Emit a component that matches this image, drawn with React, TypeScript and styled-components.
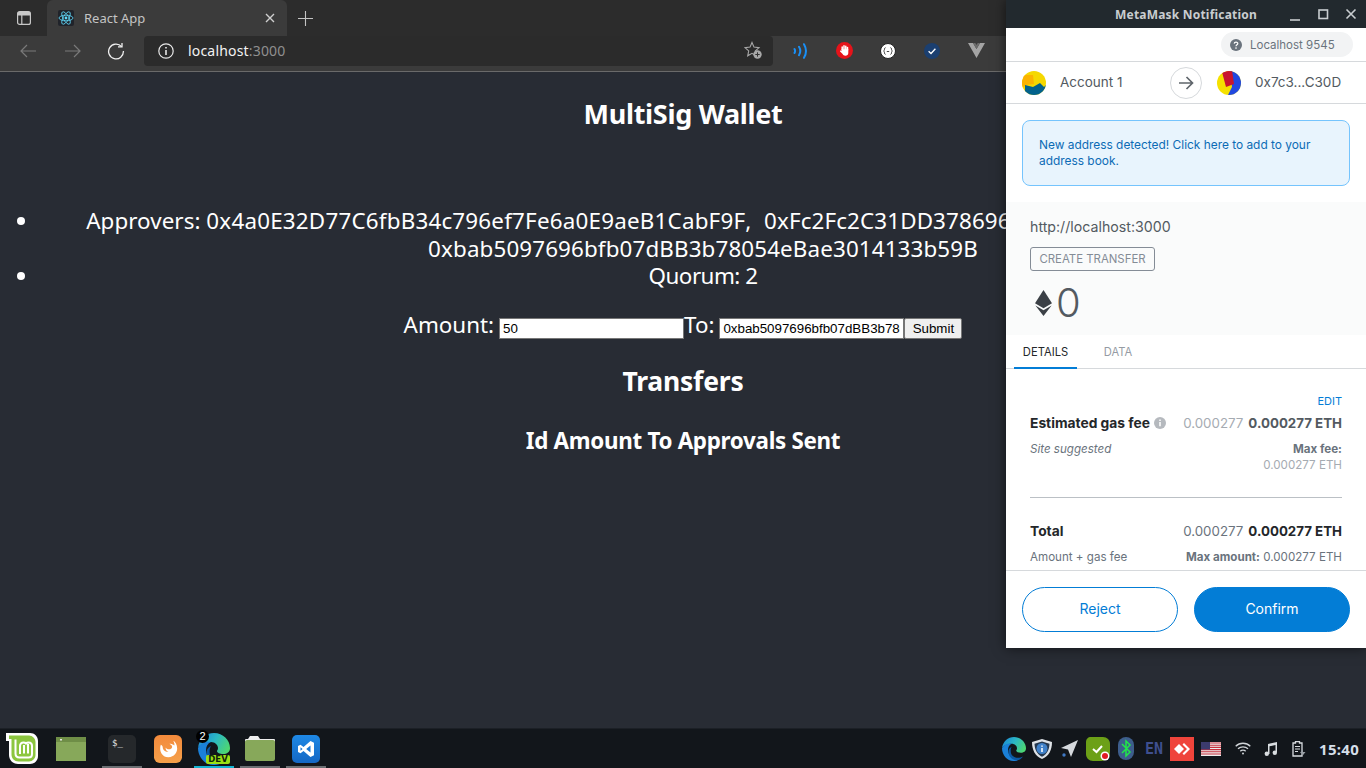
import React from "react";
import styled, { createGlobalStyle } from "styled-components";

const GlobalStyle = createGlobalStyle`
  html, body { margin: 0; padding: 0; background: #282c34; }
  * { box-sizing: border-box; }
`;

const UI_FONT = `"Noto Sans", "Liberation Sans", sans-serif`;
const MM_FONT = `Inter, "Liberation Sans", sans-serif`;

const Screen = styled.div`
  position: relative;
  width: 1366px;
  height: 768px;
  overflow: hidden;
  display: flex;
  flex-direction: column;
  background: #282c34;
  font-family: ${UI_FONT};
`;

/* browser chrome */
const TabStrip = styled.div`
  height: 36px;
  display: flex;
  align-items: center;
  background: #2c2c2c;
  color: #d8d8d8;
`;
const SideButton = styled.div`
  width: 47px;
  height: 36px;
  display: flex;
  align-items: center;
  justify-content: center;
`;
const Tab = styled.div`
  width: 240px;
  height: 36px;
  padding: 0 12px 0 11px;
  display: flex;
  align-items: center;
  background: #3b3b3b;
  border-radius: 6px 6px 0 0;
`;
const TabTitle = styled.span`
  flex: 1;
  margin-left: 10px;
  font-size: 13px;
  color: #c4c4c4;
`;
const NewTab = styled.div`
  width: 36px;
  height: 36px;
  display: flex;
  align-items: center;
  justify-content: center;
`;
const Toolbar = styled.div`
  height: 36px;
  display: flex;
  align-items: center;
  padding: 0 0 6px 6px;
  background: #3b3b3b;
  border-bottom: 1px solid #6a6a6a;
`;
const NavButton = styled.div`
  width: 44px;
  height: 30px;
  display: flex;
  align-items: center;
  justify-content: center;
`;
const UrlBar = styled.div`
  width: 629px;
  height: 30px;
  margin-left: 6px;
  padding: 0 10px 0 14px;
  display: flex;
  align-items: center;
  background: #2b2b2b;
  border-radius: 4px;
  font-size: 14px;
`;
const Host = styled.span`
  margin-left: 14px;
  flex: 1;
  color: #f2f2f2;
  letter-spacing: 0.18px;
`;
const Port = styled.span`
  color: #8f8f8f;
`;
const ExtIcon = styled.div<{ $first?: boolean }>`
  width: 44px;
  height: 30px;
  margin-left: ${(p) => (p.$first ? "5px" : "0")};
  display: flex;
  align-items: center;
  justify-content: center;
`;

/* dapp page */
const Page = styled.main`
  flex: 1;
  min-height: 0;
  color: #fff;
  text-align: center;
  overflow: hidden;
`;
const Title = styled.h1`
  margin: 26px 0 0;
  font-size: 27px;
  line-height: 32px;
  font-weight: 700;
  letter-spacing: -0.3px;
`;
const InfoList = styled.ul`
  margin: 77px 0 0;
  padding: 0 0 0 40px;
  font-size: 22.4px;
  line-height: 27.5px;
  letter-spacing: -0.52px;
`;
const Label = styled.span`
  letter-spacing: 0.05px;
`;
const Address = styled.span<{ $wide?: boolean }>`
  letter-spacing: ${(p) => (p.$wide ? "0.2px" : "0.12px")};
`;
const Separator = styled.span`
  word-spacing: 8px;
`;
const TransferForm = styled.form`
  margin-top: 20px;
  font-size: 22.4px;
  line-height: 29px;
  letter-spacing: -0.02px;
`;
const FormInput = styled.input`
  width: 185px;
  height: 21px;
  margin-left: 5px;
  padding: 1px 3px;
  border: 1px solid #767676;
  background: #fff;
  color: #000;
  font: 13.33px "Liberation Sans", sans-serif;
  letter-spacing: 0;
  vertical-align: 0;
`;
const SubmitButton = styled.button`
  width: 58px;
  height: 21px;
  padding: 0;
  border: 1px solid #767676;
  border-radius: 2px;
  background: #efefef;
  color: #000;
  font: 13.33px "Liberation Sans", sans-serif;
  letter-spacing: 0;
  vertical-align: 0;
`;
const SectionTitle = styled.h2`
  margin: 26px 0 0;
  font-size: 26.5px;
  line-height: 32px;
  font-weight: 700;
  letter-spacing: -0.2px;
`;
const TableHead = styled.h3`
  margin: 29px 0 0;
  font-size: 22.4px;
  line-height: 30px;
  font-weight: 700;
  letter-spacing: -0.3px;
`;

/* desktop panel */
const Taskbar = styled.footer`
  height: 40px;
  padding-left: 2px;
  display: flex;
  align-items: center;
  background: #12161b;
  border-top: 1px solid #1c2026;
`;
const LaunchSlot = styled.div<{ $w: number; $bar?: string }>`
  position: relative;
  width: ${(p) => p.$w}px;
  height: 39px;
  display: flex;
  align-items: center;
  justify-content: center;
  &::after {
    content: "";
    position: absolute;
    left: 3px;
    right: 3px;
    bottom: 0;
    height: 2px;
    background: ${(p) => p.$bar || "transparent"};
  }
`;
const CountBadge = styled.span`
  position: absolute;
  left: 5px;
  top: 1px;
  width: 13px;
  height: 13px;
  border-radius: 50%;
  background: #000;
  color: #fff;
  font: 11px/13px "Liberation Sans", sans-serif;
  text-align: center;
`;
const DevBadge = styled.span`
  position: absolute;
  left: 15px;
  bottom: 4px;
  width: 24px;
  height: 9px;
  border-radius: 2px;
  background: #9ce015;
  color: #10240a;
  font: 700 8.5px/9px "DejaVu Sans", sans-serif;
  text-align: center;
`;
const Tray = styled.div`
  margin-left: auto;
  display: flex;
  align-items: center;
`;
const TraySlot = styled.div<{ $gap?: number }>`
  width: 28px;
  height: 39px;
  margin-left: ${(p) => p.$gap || 0}px;
  display: flex;
  align-items: center;
  justify-content: center;
`;
const LangLabel = styled.span`
  color: #3f4f8f;
  font: 700 15px "DejaVu Sans Mono", monospace;
`;
const Clock = styled.span`
  width: 47px;
  margin-left: 6px;
  color: #d5dfe9;
  font: 700 15px "Noto Sans", sans-serif;
  letter-spacing: 0.3px;
`;

/* metamask window */
const Popup = styled.section`
  position: absolute;
  left: 1006px;
  top: 0;
  width: 360px;
  height: 648px;
  display: flex;
  flex-direction: column;
  background: #fff;
  box-shadow: 0 0 12px rgba(0, 0, 0, 0.6);
  font-family: ${MM_FONT};
  color: #24272a;
`;
const TitleBar = styled.header`
  position: relative;
  height: 28px;
  flex: none;
  display: flex;
  align-items: center;
  justify-content: center;
  background: #22292e;
  color: #c9cdd0;
  font: 700 12px ${UI_FONT};
  letter-spacing: 0.2px;
`;
const WinControls = styled.div`
  position: absolute;
  right: 7px;
  top: 6px;
  display: flex;
  gap: 12px;
`;
const NetworkRow = styled.div`
  height: 34px;
  flex: none;
  padding: 4px 13px 0 0;
  display: flex;
  justify-content: flex-end;
  align-items: flex-start;
  border-bottom: 1px solid #d6d9dc;
`;
const NetworkPill = styled.div`
  width: 132px;
  height: 25px;
  padding-left: 9px;
  display: flex;
  align-items: center;
  gap: 8px;
  border-radius: 13px;
  background: #f2f3f4;
  color: #6a737d;
  font-size: 11.5px;
`;
const AccountRow = styled.div`
  position: relative;
  height: 42px;
  flex: none;
  display: grid;
  grid-template-columns: 1fr 1fr;
  border-bottom: 1px solid #d6d9dc;
  font-size: 13.5px;
  color: #535a61;
`;
const Party = styled.div<{ $gap: number; $pad: number }>`
  display: flex;
  align-items: center;
  gap: ${(p) => p.$gap}px;
  padding-left: ${(p) => p.$pad}px;
`;
const PartyName = styled.span`
  position: relative;
  top: -1px;
`;
const ArrowDisc = styled.div`
  position: absolute;
  left: 164px;
  top: 5px;
  width: 32px;
  height: 32px;
  display: flex;
  align-items: center;
  justify-content: center;
  border: 1px solid #d6d9dc;
  border-radius: 50%;
  background: #fff;
`;
const Notice = styled.div`
  flex: none;
  height: 66px;
  margin: 16px 16px 16px;
  padding: 16px 16px 0;
  border: 1px solid #75c4fd;
  border-radius: 8px;
  background: #e8f4fd;
  color: #0c6bb5;
  font-size: 11.9px;
  line-height: 16px;
`;
const Summary = styled.div`
  height: 133px;
  flex: none;
  padding: 16px 16px 0 24px;
  background: #fafbfb;
`;
const Origin = styled.div`
  font-size: 14.2px;
  line-height: 18px;
  color: #535a61;
`;
const MethodTag = styled.div`
  width: 125px;
  height: 24px;
  margin-top: 11px;
  display: flex;
  align-items: center;
  justify-content: center;
  border: 1px solid #848c96;
  border-radius: 3px;
  color: #848c96;
  font-size: 11.4px;
`;
const AmountRow = styled.div`
  margin-top: 10px;
  padding-left: 5px;
  display: flex;
  align-items: center;
  gap: 4px;
  font-size: 40px;
  line-height: 44px;
  font-weight: 300;
  color: #535a61;
`;
const TabRow = styled.nav`
  height: 34px;
  flex: none;
  padding-left: 8px;
  display: flex;
  border-bottom: 1px solid #d6d9dc;
`;
const DetailTab = styled.div<{ $active?: boolean }>`
  width: ${(p) => (p.$active ? "63px" : "82px")};
  height: 34px;
  padding-top: 9.5px;
  text-align: center;
  font-size: 11.2px;
  line-height: 14px;
  color: ${(p) => (p.$active ? "#24272a" : "#959ba3")};
  border-bottom: ${(p) => (p.$active ? "2px solid #037dd6" : "none")};
`;
const Details = styled.div`
  flex: 1;
  min-height: 0;
  overflow: hidden;
  padding: 25px 24px 0;
`;
const EditLink = styled.div`
  text-align: right;
  font-size: 11px;
  line-height: 14px;
  color: #037dd6;
`;
const FeeRow = styled.div<{ $top: number; $start?: boolean }>`
  margin-top: ${(p) => p.$top}px;
  display: flex;
  justify-content: space-between;
  align-items: ${(p) => (p.$start ? "flex-start" : "center")};
`;
const FeeLabel = styled.div`
  display: flex;
  align-items: center;
  gap: 4px;
  font-size: 13.8px;
  font-weight: 700;
  line-height: 18px;
  color: #24272a;
`;
const FeeValue = styled.div`
  font-size: 13.3px;
  line-height: 18px;
  font-weight: 700;
  color: #535a61;
`;
const Faint = styled.span<{ $dark?: boolean }>`
  margin-right: 5px;
  font-weight: 400;
  color: ${(p) => (p.$dark ? "#6a737d" : "#a5abb2")};
`;
const Strong = styled.span`
  color: #24272a;
`;
const SmallNote = styled.div<{ $italic?: boolean }>`
  font-size: 11.6px;
  line-height: 16px;
  font-style: ${(p) => (p.$italic ? "italic" : "normal")};
  color: #6a737d;
`;
const MaxFee = styled.div<{ $dark?: boolean }>`
  text-align: right;
  font-size: 11.6px;
  line-height: 16px;
  color: ${(p) => (p.$dark ? "#6a737d" : "#a5abb2")};
`;
const MaxLabel = styled.b`
  color: #6a737d;
`;
const Rule = styled.hr`
  margin: 24px 0 0;
  border: 0;
  border-top: 1px solid #bbc0c5;
`;
const Footer = styled.div`
  height: 78px;
  flex: none;
  padding: 16px 16px 0;
  display: flex;
  gap: 16px;
  border-top: 1px solid #d6d9dc;
`;
const ActionButton = styled.button<{ $primary?: boolean }>`
  flex: 1;
  height: 45px;
  padding: 0 0 2px;
  border: 1px solid #037dd6;
  border-radius: 23px;
  background: ${(p) => (p.$primary ? "#037dd6" : "#fff")};
  color: ${(p) => (p.$primary ? "#fff" : "#037dd6")};
  font: 400 14px ${MM_FONT};
`;

const SidebarIcon = () => (
  <svg width="16" height="16" viewBox="0 0 16 16" fill="none" stroke="#c8c8c8" strokeWidth="1.2">
    <rect x="1.6" y="1.6" width="12.8" height="12.8" rx="2" />
    <path d="M1.6 5h12.8M5.8 5v9.4" />
    <path d="M2 2h12v3H2z" fill="#c8c8c8" stroke="none" />
  </svg>
);
const ReactFavicon = () => (
  <svg width="16" height="16" viewBox="0 0 16 16" fill="none" stroke="#61dafb" strokeWidth="0.8">
    <rect width="16" height="16" rx="2" fill="#20232a" stroke="none" />
    <ellipse cx="8" cy="8" rx="7" ry="2.8" />
    <ellipse cx="8" cy="8" rx="7" ry="2.8" transform="rotate(60 8 8)" />
    <ellipse cx="8" cy="8" rx="7" ry="2.8" transform="rotate(120 8 8)" />
    <circle cx="8" cy="8" r="1.4" fill="#61dafb" stroke="none" />
  </svg>
);
const CloseGlyph = () => (
  <svg width="10" height="10" viewBox="0 0 10 10" stroke="#cfcfcf" strokeWidth="1.4">
    <path d="M1 1l8 8M9 1l-8 8" />
  </svg>
);
const PlusGlyph = () => (
  <svg width="15" height="15" viewBox="0 0 15 15" stroke="#c4c4c4" strokeWidth="1.1">
    <path d="M7.5 0v15M0 7.5h15" />
  </svg>
);
const ArrowGlyph = ({ d }: { d: string }) => (
  <svg width="17" height="14" viewBox="0 0 17 14" fill="none" stroke="#7a7a7a" strokeWidth="1.2">
    <path d={d} />
  </svg>
);
const ReloadGlyph = () => (
  <svg width="18" height="18" viewBox="0 0 18 18" fill="none" stroke="#f0f0f0" strokeWidth="1.3">
    <path d="M14.6 4.6A7.4 7.4 0 1 0 16.4 9" />
    <path d="M11 4.8h4V1" />
  </svg>
);
const InfoGlyph = () => (
  <svg width="16" height="16" viewBox="0 0 16 16" fill="none" stroke="#e8e8e8" strokeWidth="1.2">
    <circle cx="8" cy="8" r="7.2" />
    <path d="M8 7v5M8 4v1.6" strokeWidth="1.6" />
  </svg>
);
const StarAdd = () => (
  <svg width="19" height="19" viewBox="0 0 19 19" fill="none">
    <path d="M8 1.5l2 4.6 5 .5-3.7 3.3 1 4.9L8 12.3l-4.3 2.5 1-4.9L1 6.6l5-.5z" stroke="#a8a8a8" strokeWidth="1.1" />
    <circle cx="13.5" cy="13.5" r="4.2" fill="#a8a8a8" />
    <path d="M13.5 11.3v4.4M11.3 13.5h4.4" stroke="#333" strokeWidth="1" />
  </svg>
);
const WavesExt = () => (
  <svg width="15" height="16" viewBox="0 0 15 16" fill="none" stroke="#1a8ff5" strokeWidth="2" strokeLinecap="round">
    <path d="M1.5 6q1.2 2 0 4M6 3.800q2.600 4.200 0 8.400M11 1.200q4 6.800 0 13.600" />
  </svg>
);
const StopExt = () => (
  <svg width="17" height="17" viewBox="0 0 17 17">
    <circle cx="8.500" cy="8.500" r="8.500" fill="#e5131a" />
    <path d="M6.200 8V5M8 7.500V3.800M9.800 7.500V4.300M11.500 8V5.500" stroke="#fff" strokeWidth="1.500" strokeLinecap="round" />
    <path d="M5.400 7.200h6.900V11c0 1.700-1.200 2.800-2.900 2.800-1.400 0-2.200-.6-2.800-1.700L4.100 9.500c-.4-.8.500-1.400 1.100-.8l.6.600z" fill="#fff" />
  </svg>
);
const BracketExt = () => (
  <svg width="16" height="16" viewBox="0 0 16 16">
    <circle cx="8" cy="8" r="7.5" fill="#fff" stroke="#222" strokeWidth="1" />
    <path d="M5.500 4.500C4 4.500 5 8 3.600 8 5 8 4 11.500 5.500 11.500M10.500 4.500C12 4.500 11 8 12.400 8 11 8 12 11.500 10.500 11.500M6.800 8.500h2.400" fill="none" stroke="#333" strokeWidth="0.9" />
  </svg>
);
const CheckExt = () => (
  <svg width="16" height="16" viewBox="0 0 16 16">
    <circle cx="8" cy="8" r="8" fill="#1b3f70" />
    <path d="M4.600 8.300l2.400 2.200 4.400-4.800" fill="none" stroke="#fff" strokeWidth="1.300" />
  </svg>
);
const VueExt = () => (
  <svg width="17" height="15" viewBox="0 0 17 15">
    <path d="M0 0h5l3.500 6L12 0h5L8.500 15z" fill="#a4a4a4" />
    <path d="M5 0h2.300l1.200 2 1.200-2H12L8.500 6z" fill="#6c6c6c" />
  </svg>
);

const Jazzicon = ({ kind }: { kind: "a" | "b" }) => (
  <svg width="24" height="24" viewBox="0 0 24 24">
    <defs>
      <clipPath id={`jz-${kind}`}>
        <circle cx="12" cy="12" r="12" />
      </clipPath>
    </defs>
    {kind === "a" ? (
      <g clipPath="url(#jz-a)">
        <rect width="24" height="24" fill="#f5d800" />
        <path d="M0 4h11l1 9-8 1-4 3z" fill="#fbb300" />
        <path d="M3 14l8 2 7-4 4 4 2-2v10H3z" fill="#03628c" />
      </g>
    ) : (
      <g clipPath="url(#jz-b)">
        <rect width="24" height="24" fill="#f5e100" />
        <path d="M13 -2l11 2v26H10l5-10z" fill="#2148e0" />
        <path d="M5 1l10-2 2 14-8 3z" fill="#c8152e" />
      </g>
    )}
  </svg>
);
const HelpDot = () => (
  <svg width="12" height="12" viewBox="0 0 12 12">
    <circle cx="6" cy="6" r="6" fill="#6a737d" />
    <path d="M4.200 4.600C4.300 2.600 7.800 2.600 7.800 4.500 7.800 5.800 6 5.700 6 7.200" fill="none" stroke="#fff" strokeWidth="1.200" />
    <circle cx="6" cy="9.100" r="0.8" fill="#fff" />
  </svg>
);
const EthMark = () => (
  <svg width="17" height="26" viewBox="0 0 17 26">
    <path d="M8.500 0L17 13.200 8.500 18.200 0 13.200z" fill="#3b4046" />
    <path d="M8.500 20.200L16.600 15.400 8.500 26 .4 15.400z" fill="#3b4046" />
  </svg>
);
const FeeInfo = () => (
  <svg width="12" height="12" viewBox="0 0 12 12">
    <circle cx="6" cy="6" r="6" fill="#b5b9be" />
    <path d="M6 5v4.200M6 2.400v1.500" stroke="#fff" strokeWidth="1.500" />
  </svg>
);
const PopupArrow = () => (
  <svg width="16" height="14" viewBox="0 0 16 14" fill="none" stroke="#5f656b" strokeWidth="1.700">
    <path d="M1 7h13M8.500 1l6 6-6 6" />
  </svg>
);

const MintLogo = () => (
  <svg width="32" height="31" viewBox="0 0 32 31">
    <path d="M0 0h24c4.500 0 8 3.500 8 8v15c0 4.500-3.500 8-8 8H12c-5 0-9-4-9-9V8H0z" fill="#fff" />
    <path d="M3 2.500h20c3.500 0 6.500 3 6.500 6.500v13c0 3.500-3 6.500-6.500 6.500H12.500C8.500 28.500 5.500 25.500 5.500 21.500V6H3z" fill="#8cc63f" />
    <path d="M9.500 6.500v14c0 2.500 1.500 4 4 4h9c2 0 3.500-1.500 3.500-3.500v-8c0-2-1.500-3.500-3.500-3.500-1.200 0-2 .5-2.500 1-.6-.6-1.400-1-2.500-1-2.200 0-3.500 1.500-3.500 3.500v8" fill="none" stroke="#fff" strokeWidth="2" />
    <path d="M18 12v8.500M22 11v9.500" stroke="#fff" strokeWidth="2" />
  </svg>
);
const WindowIcon = () => (
  <svg width="30" height="24" viewBox="0 0 30 24">
    <rect width="30" height="24" fill="#87a85a" />
    <rect width="30" height="5" fill="#6f8e47" />
    <rect x="4" y="2" width="2" height="1.500" fill="#e8e8e8" />
  </svg>
);
const TerminalIcon = () => (
  <svg width="28" height="28" viewBox="0 0 28 28">
    <rect width="28" height="28" rx="5" fill="#25282b" />
    <text x="4" y="11" fill="#e8e8e8" fontSize="9" fontFamily="DejaVu Sans Mono">$_</text>
  </svg>
);
const FoxIcon = () => (
  <svg width="28" height="28" viewBox="0 0 29 29">
    <defs>
      <linearGradient id="fox-bg" x1="0" y1="0" x2="0" y2="1">
        <stop offset="0" stopColor="#f38a3c" />
        <stop offset="1" stopColor="#f5a04a" />
      </linearGradient>
    </defs>
    <rect width="29" height="29" rx="6" fill="url(#fox-bg)" />
    <path d="M7 10c-2 6 1 13 8 13 6 0 9-5 9-9 0-4-2-7-4-8 1 2 1.500 4 1 5-1-1.500-3-2-5-2 2 1 4 3 2 5-2 1.500-5 1-6-1 0 2 1 4 3 4.500-3 .5-6-2-6-5 0-.8-.500-1.800-2-2.500z" fill="#fff" />
  </svg>
);
const EdgeIcon = ({ size }: { size: number }) => (
  <svg width={size} height={size} viewBox="0 0 32 32">
    <defs>
      <linearGradient id={`edge-${size}`} x1="0" y1="0.2" x2="1" y2="0.6">
        <stop offset="0" stopColor="#1b87d8" />
        <stop offset="0.5" stopColor="#2bb8c4" />
        <stop offset="1" stopColor="#4dd672" />
      </linearGradient>
    </defs>
    <path d="M0 15C1 6 8 0 16 0c9 0 16 7 16 15 0 4-3 6-7 6-3 0-6-1-6-3 0-1 1-1 1-3 0-3-3-6-7-6-5 0-11 2-13 6z" fill={`url(#edge-${size})`} />
    <path d="M0 15c3-6 9-7 13-6-5 2-6 8-4 13 2 5 8 9 14 8-3 2-6 2-8 2C7 32 0 24 0 15z" fill="#1a80d8" />
    <path d="M13 13c-2 3-2 9 1 12 3 3 9 4 14 1-2 3-5 5-8 5-5 0-10-3-11-9-1-4 0-7 4-9z" fill="#0c59a4" />
  </svg>
);
const FolderIcon = () => (
  <svg width="30" height="25" viewBox="0 0 30 25">
    <path d="M3 3l2-3h8l2 3z" fill="#eee" />
    <rect y="3" width="30" height="3" rx="1" fill="#eee" />
    <rect y="4" width="30" height="21" rx="2" fill="#87a85a" />
  </svg>
);
const VsCodeIcon = () => (
  <svg width="28" height="28" viewBox="0 0 28 28">
    <defs>
      <linearGradient id="vs-bg" x1="0" y1="0" x2="0" y2="1">
        <stop offset="0" stopColor="#1e88e5" />
        <stop offset="1" stopColor="#1467c4" />
      </linearGradient>
    </defs>
    <rect width="28" height="28" rx="5" fill="url(#vs-bg)" />
    <path d="M18.500 6l3.500 1.800v12.400L18.500 22l-7-6-3 2.300L6 17v-6l2.500-1.300 3 2.300zM18.500 10.500L14.200 14l4.300 3.500zM8.500 12.300v3.400l2.100-1.700z" fill="#fff" fillRule="evenodd" />
  </svg>
);
const ShieldIcon = () => (
  <svg width="20" height="20" viewBox="0 0 20 20">
    <path d="M10 0l10 3c0 8-3 14-10 17C3 17 0 11 0 3z" fill="#dfe3e7" />
    <path d="M10 2.500l7.500 2.200c-.2 6-2.500 10.500-7.500 13-5-2.500-7.300-7-7.500-13z" fill="#24384f" />
    <circle cx="10" cy="9.500" r="5.500" fill="#3f80c8" />
    <path d="M10 6.400v1.400M10 9v4" stroke="#fff" strokeWidth="1.500" />
  </svg>
);
const SendIcon = () => (
  <svg width="18" height="18" viewBox="0 0 18 18">
    <path d="M17 0L0 8l7 1.500L10 17z" fill="#d5d9dd" />
    <circle cx="3" cy="15" r="1.700" fill="#3f78c4" />
  </svg>
);
const TaskCheckIcon = () => (
  <svg width="24" height="24" viewBox="0 0 24 24">
    <path d="M5 0h12c4 0 7 3 7 7v8c0 5-4 9-9 9H7c-4 0-7-3-7-7V5c0-3 2-5 5-5z" fill="#6ca017" />
    <path d="M7 12l3.500 3L16 9" fill="none" stroke="#fff" strokeWidth="2" />
    <circle cx="19" cy="19" r="4.500" fill="#fff" />
    <circle cx="19" cy="19" r="3" fill="#e21b24" />
  </svg>
);
const BluetoothIcon = () => (
  <svg width="16" height="23" viewBox="0 0 16 23">
    <rect width="16" height="23" rx="8" fill="#3d5e8c" />
    <path d="M4 7l8 8-4 4V4l4 4-8 8" fill="none" stroke="#22e64a" strokeWidth="1.500" />
  </svg>
);
const AnyDeskIcon = () => (
  <svg width="24" height="24" viewBox="0 0 24 24">
    <rect width="24" height="24" fill="#ef443b" />
    <path d="M4 12l5-5 5 5-5 5z" fill="#fff" />
    <path d="M14 6l6 6-6 6-1.500-1.500L17 12l-4.500-4.500z" fill="#fff" />
  </svg>
);
const FlagIcon = () => (
  <svg width="20" height="14" viewBox="0 0 20 14">
    <rect width="20" height="14" fill="#eee" />
    <path d="M0 1h20M0 3.200h20M0 5.400h20M0 7.600h20M0 9.800h20M0 12h20" stroke="#c8313e" strokeWidth="1.100" />
    <rect width="9" height="7.500" fill="#3c3b6e" />
  </svg>
);
const WifiIcon = () => (
  <svg width="16" height="13" viewBox="0 0 16 13" fill="none" stroke="#d0d4d8" strokeWidth="1.300">
    <path d="M.7 4.200a10.500 10.500 0 0 1 14.600 0M3 6.800a7.200 7.200 0 0 1 10 0M5.300 9.200a3.800 3.800 0 0 1 5.400 0" />
    <circle cx="8" cy="11.500" r="1" fill="#d0d4d8" stroke="none" />
  </svg>
);
const MusicIcon = () => (
  <svg width="14" height="14" viewBox="0 0 14 14">
    <path d="M4 2l9-2v10.500h-1.500V3L5.500 4.300V12H4z" fill="#d8dce0" />
    <circle cx="2.800" cy="11.800" r="2.200" fill="#d8dce0" />
    <circle cx="10.800" cy="10.800" r="2.200" fill="#d8dce0" />
  </svg>
);
const BatteryIcon = () => (
  <svg width="14" height="16" viewBox="0 0 14 16" fill="none">
    <path d="M1 2h2.500V.500h4V2H10v13H1z" stroke="#d8dce0" strokeWidth="1.300" />
    <path d="M3 5.500h5M3 8h5M3 10.500h3" stroke="#d8dce0" strokeWidth="1.200" />
    <path d="M11 8l-3 4h2.500L9.500 16l4-5H11z" fill="#9aa0a6" />
  </svg>
);

const App: React.FC = () => (
  <Screen>
    <GlobalStyle />
    <TabStrip>
      <SideButton>
        <SidebarIcon />
      </SideButton>
      <Tab>
        <ReactFavicon />
        <TabTitle>React App</TabTitle>
        <CloseGlyph />
      </Tab>
      <NewTab>
        <PlusGlyph />
      </NewTab>
    </TabStrip>
    <Toolbar>
      <NavButton>
        <ArrowGlyph d="M16 7H1M7 1L1 7l6 6" />
      </NavButton>
      <NavButton>
        <ArrowGlyph d="M1 7h15M10 1l6 6-6 6" />
      </NavButton>
      <NavButton>
        <ReloadGlyph />
      </NavButton>
      <UrlBar>
        <InfoGlyph />
        <Host>
          localhost<Port>:3000</Port>
        </Host>
        <StarAdd />
      </UrlBar>
      <ExtIcon $first>
        <WavesExt />
      </ExtIcon>
      <ExtIcon>
        <StopExt />
      </ExtIcon>
      <ExtIcon>
        <BracketExt />
      </ExtIcon>
      <ExtIcon>
        <CheckExt />
      </ExtIcon>
      <ExtIcon>
        <VueExt />
      </ExtIcon>
    </Toolbar>

    <Page>
      <Title>MultiSig Wallet</Title>
      <InfoList>
        <li>
          <Label>Approvers: </Label>
          <Address $wide>0x4a0E32D77C6fbB34c796ef7Fe6a0E9aeB1CabF9F</Address>
          <Separator>, </Separator>
          <Address>0xFc2Fc2C31DD378696aB1C2D3E4F5a6B7c8D9E0F1</Address>
          <Separator>, </Separator>
          <Address>0xbab5097696bfb07dBB3b78054eBae3014133b59B</Address>
        </li>
        <li>Quorum: 2</li>
      </InfoList>
      <TransferForm onSubmit={(e) => e.preventDefault()}>
        Amount:
        <FormInput defaultValue="50" />
        To:
        <FormInput defaultValue="0xbab5097696bfb07dBB3b78054eBae3014133b59B" />
        <SubmitButton>Submit</SubmitButton>
      </TransferForm>
      <SectionTitle>Transfers</SectionTitle>
      <TableHead>Id Amount To Approvals Sent</TableHead>
    </Page>

    <Taskbar>
      <LaunchSlot $w={40}>
        <MintLogo />
      </LaunchSlot>
      <LaunchSlot $w={57}>
        <WindowIcon />
      </LaunchSlot>
      <LaunchSlot $w={46} $bar="#6b6f73">
        <TerminalIcon />
      </LaunchSlot>
      <LaunchSlot $w={46}>
        <FoxIcon />
      </LaunchSlot>
      <LaunchSlot $w={46} $bar="#14b4d2">
        <EdgeIcon size={32} />
        <CountBadge>2</CountBadge>
        <DevBadge>DEV</DevBadge>
      </LaunchSlot>
      <LaunchSlot $w={46} $bar="#6b6f73">
        <FolderIcon />
      </LaunchSlot>
      <LaunchSlot $w={46} $bar="#6b6f73">
        <VsCodeIcon />
      </LaunchSlot>
      <Tray>
        <TraySlot>
          <EdgeIcon size={24} />
        </TraySlot>
        <TraySlot>
          <ShieldIcon />
        </TraySlot>
        <TraySlot>
          <SendIcon />
        </TraySlot>
        <TraySlot>
          <TaskCheckIcon />
        </TraySlot>
        <TraySlot>
          <BluetoothIcon />
        </TraySlot>
        <TraySlot>
          <LangLabel>EN</LangLabel>
        </TraySlot>
        <TraySlot>
          <AnyDeskIcon />
        </TraySlot>
        <TraySlot $gap={1}>
          <FlagIcon />
        </TraySlot>
        <TraySlot $gap={4}>
          <WifiIcon />
        </TraySlot>
        <TraySlot>
          <MusicIcon />
        </TraySlot>
        <TraySlot>
          <BatteryIcon />
        </TraySlot>
        <Clock>15:40</Clock>
      </Tray>
    </Taskbar>

    <Popup>
      <TitleBar>
        MetaMask Notification
        <WinControls>
          <svg width="16" height="16" viewBox="0 0 16 16" stroke="#c9cdd0" strokeWidth="1.600" fill="none">
            <path d="M3 14h10" />
          </svg>
          <svg width="16" height="16" viewBox="0 0 16 16" stroke="#c9cdd0" strokeWidth="1.600" fill="none">
            <rect x="4" y="4" width="8.500" height="8.500" />
          </svg>
          <svg width="16" height="16" viewBox="0 0 16 16" stroke="#c9cdd0" strokeWidth="1.600" fill="none">
            <path d="M3.500 3.500l9 9M12.500 3.500l-9 9" />
          </svg>
        </WinControls>
      </TitleBar>
      <NetworkRow>
        <NetworkPill>
          <HelpDot />
          Localhost 9545
        </NetworkPill>
      </NetworkRow>
      <AccountRow>
        <Party $gap={14} $pad={16}>
          <Jazzicon kind="a" />
          <PartyName>Account 1</PartyName>
        </Party>
        <Party $gap={14} $pad={31}>
          <Jazzicon kind="b" />
          <PartyName>0x7c3...C30D</PartyName>
        </Party>
        <ArrowDisc>
          <PopupArrow />
        </ArrowDisc>
      </AccountRow>
      <Notice>New address detected! Click here to add to your address book.</Notice>
      <Summary>
        <Origin>http://localhost:3000</Origin>
        <MethodTag>CREATE TRANSFER</MethodTag>
        <AmountRow>
          <EthMark />0
        </AmountRow>
      </Summary>
      <TabRow>
        <DetailTab $active>DETAILS</DetailTab>
        <DetailTab>DATA</DetailTab>
      </TabRow>
      <Details>
        <EditLink>EDIT</EditLink>
        <FeeRow $top={6}>
          <FeeLabel>
            Estimated gas fee <FeeInfo />
          </FeeLabel>
          <FeeValue>
            <Faint>0.000277</Faint>0.000277 ETH
          </FeeValue>
        </FeeRow>
        <FeeRow $top={9} $start>
          <SmallNote $italic>Site suggested</SmallNote>
          <MaxFee>
            <MaxLabel>Max fee:</MaxLabel>
            <br />
            0.000277 ETH
          </MaxFee>
        </FeeRow>
        <Rule />
        <FeeRow $top={24}>
          <FeeLabel>Total</FeeLabel>
          <FeeValue>
            <Faint $dark>0.000277</Faint>
            <Strong>0.000277 ETH</Strong>
          </FeeValue>
        </FeeRow>
        <FeeRow $top={9}>
          <SmallNote>Amount + gas fee</SmallNote>
          <MaxFee $dark>
            <MaxLabel>Max amount:</MaxLabel> 0.000277 ETH
          </MaxFee>
        </FeeRow>
      </Details>
      <Footer>
        <ActionButton>Reject</ActionButton>
        <ActionButton $primary>Confirm</ActionButton>
      </Footer>
    </Popup>
  </Screen>
);

export default App;
